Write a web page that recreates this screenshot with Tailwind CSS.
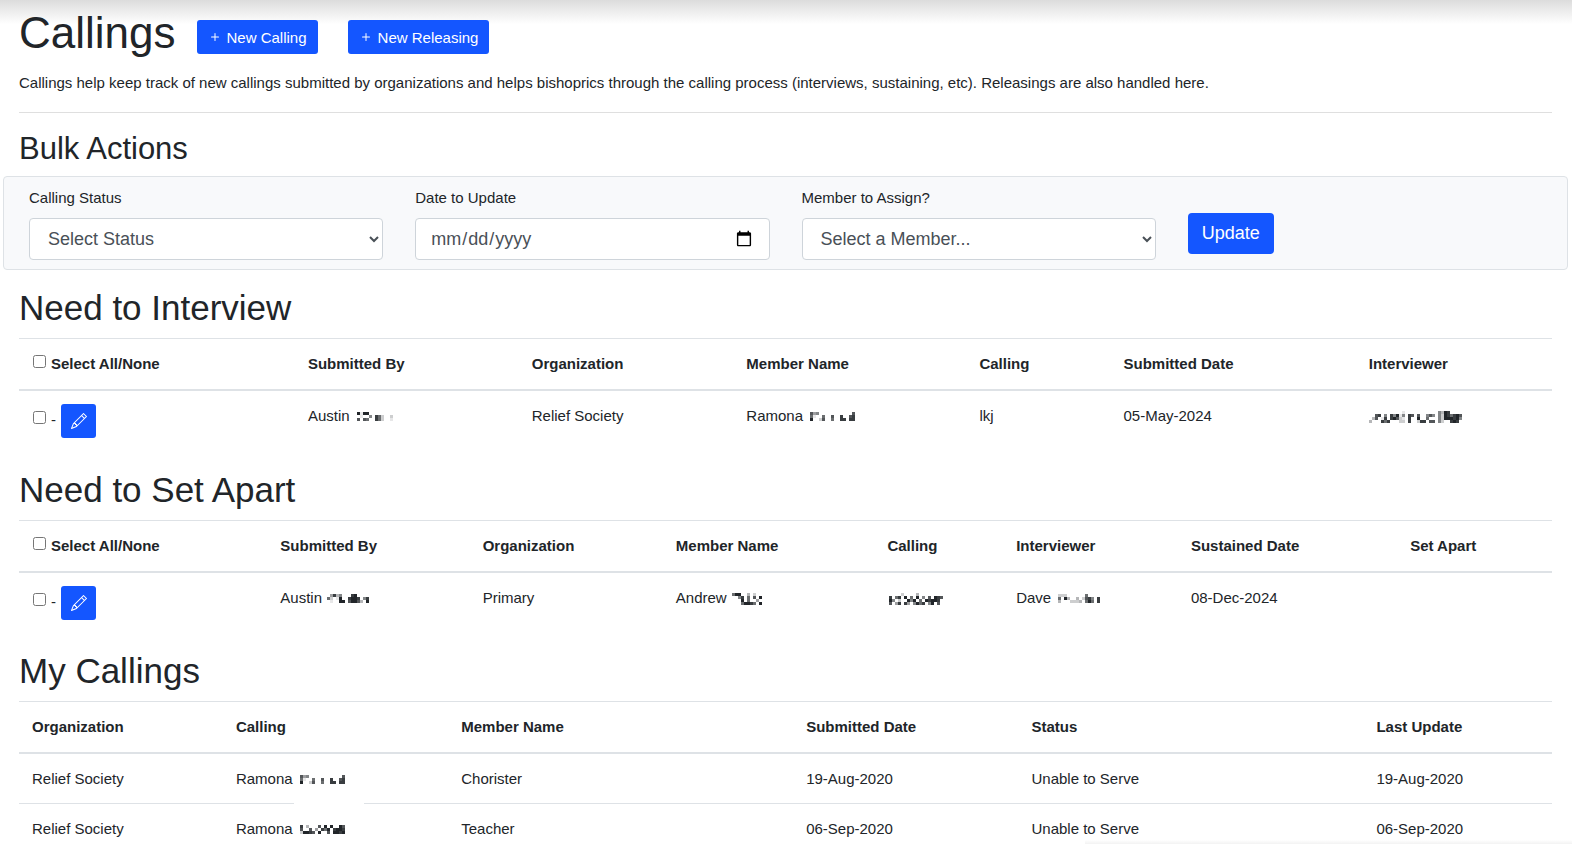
<!DOCTYPE html>
<html lang="en">
<head>
  <meta charset="UTF-8">
  <meta name="viewport" content="width=device-width, initial-scale=1">
  <title>Callings</title>
  <script src="https://cdn.jsdelivr.net/npm/@tailwindcss/browser@4"></script>
</head>
<body class="relative h-screen overflow-hidden bg-white font-['Liberation_Sans',Arial,sans-serif] text-[15px] leading-[23px] text-[#212529]">
  <div class="pointer-events-none absolute inset-x-0 top-0 h-6 bg-linear-to-b from-[#dcdcdc] to-transparent"></div>
  <div class="pointer-events-none absolute bottom-0 right-0 h-1 w-[31%] bg-linear-to-b from-transparent to-black/5"></div>

  <main class="relative pl-[19px] pr-5 pt-1.5">
    <header class="flex items-center">
      <h1 class="mr-[21px] text-[44px] leading-[54px]">Callings</h1>
      <button type="button" class="mt-2 mr-[30px] flex h-[34px] items-center gap-1 rounded-[3px] bg-[#1456ff] pl-2.5 pr-[11px] text-white">
        <svg class="size-4" viewBox="0 0 16 16" fill="currentColor"><path d="M8 4a.5.5 0 0 1 .5.5v3h3a.5.5 0 0 1 0 1h-3v3a.5.5 0 0 1-1 0v-3h-3a.5.5 0 0 1 0-1h3v-3A.5.5 0 0 1 8 4z"/></svg>
        New Calling
      </button>
      <button type="button" class="mt-2 flex h-[34px] items-center gap-1 rounded-[3px] bg-[#1456ff] pl-2.5 pr-[11px] text-white">
        <svg class="size-4" viewBox="0 0 16 16" fill="currentColor"><path d="M8 4a.5.5 0 0 1 .5.5v3h3a.5.5 0 0 1 0 1h-3v3a.5.5 0 0 1-1 0v-3h-3a.5.5 0 0 1 0-1h3v-3A.5.5 0 0 1 8 4z"/></svg>
        New Releasing
      </button>
    </header>
    <p class="mt-[11px]">Callings help keep track of new callings submitted by organizations and helps bishoprics through the calling process (interviews, sustaining, etc). Releasings are also handled here.</p>
    <hr class="mt-[18px] border-[#dfdfdf]">

    <h2 class="mt-[17px] text-[31px] leading-[38px]">Bulk Actions</h2>
    <form class="-mx-4 mt-2 grid grid-cols-4 gap-8 rounded-[4px] border border-[#dee2e6] bg-[#f8f9fb] px-[25px] py-[9px]">
      <div>
        <label for="status" class="mb-[9px] block">Calling Status</label>
        <select id="status" class="h-[42px] w-full rounded-[4px] border border-[#ced4da] bg-white px-3.5 text-[18px] text-[#495057]">
          <option>Select Status</option>
        </select>
      </div>
      <div>
        <label for="date" class="mb-[9px] block">Date to Update</label>
        <input id="date" type="date" class="h-[42px] w-full rounded-[4px] border border-[#ced4da] bg-white px-3.5 text-[18px] text-[#495057]">
      </div>
      <div>
        <label for="member" class="mb-[9px] block">Member to Assign?</label>
        <select id="member" class="h-[42px] w-full rounded-[4px] border border-[#ced4da] bg-white px-3.5 text-[18px] text-[#495057]">
          <option>Select a Member...</option>
        </select>
      </div>
      <div class="pt-[27px]">
        <button type="button" class="h-[41px] rounded-[4px] bg-[#1456ff] px-3.5 text-[18px] text-white">Update</button>
      </div>
    </form>

    <!-- Need to Interview -->
    <h2 class="mt-4 text-[35px] leading-[44px]">Need to Interview</h2>
    <table class="mt-2 w-full table-fixed border-separate border-spacing-0 text-left">
      <thead>
        <tr class="*:border-t *:border-b-2 *:border-[#dee2e6] *:px-[13px] *:pt-[13px] *:pb-3.5">
          <th class="w-[18%]"><label class="flex gap-[5px] pl-px"><input type="checkbox" class="mt-[3px] size-[13px]">Select All/None</label></th>
          <th class="w-[14.6%]">Submitted By</th>
          <th class="w-[14%]">Organization</th>
          <th class="w-[15.2%]">Member Name</th>
          <th class="w-[9.4%]">Calling</th>
          <th class="w-[16%]">Submitted Date</th>
          <th class="w-[12.8%]">Interviewer</th>
        </tr>
      </thead>
      <tbody>
        <tr class="align-top *:px-[13px] *:py-[13px]">
          <td>
            <div class="flex items-center gap-[5px] pl-px">
              <input type="checkbox" aria-label="Select Ramona" class="mb-2 size-[13px]"><span class="pb-1">-</span>
              <button type="button" aria-label="Edit" class="flex h-[34px] w-[35px] items-center justify-center rounded-[3px] bg-[#1456ff] text-white">
                <svg class="size-4" viewBox="0 0 16 16" fill="currentColor"><path d="M12.146.146a.5.5 0 0 1 .708 0l3 3a.5.5 0 0 1 0 .708l-10 10a.5.5 0 0 1-.168.11l-5 2a.5.5 0 0 1-.65-.65l2-5a.5.5 0 0 1 .11-.168l10-10zM11.207 2.5 13.5 4.793 14.793 3.5 12.5 1.207 11.207 2.5zm1.586 3L10.5 3.207 4 9.707V10h.5a.5.5 0 0 1 .5.5v.5h.5a.5.5 0 0 1 .5.5v.5h.293l6.5-6.5zm-9.761 5.175-.106.106-1.528 3.821 3.821-1.528.106-.106A.5.5 0 0 1 5 12.5V12h-.5a.5.5 0 0 1-.5-.5V11h-.5a.5.5 0 0 1-.468-.325z"/></svg>
              </button>
            </div>
          </td>
          <td>Austin <svg class="ml-[3px] inline-block align-baseline" data-mask="919900000000 010050862002 707600862001"></svg></td>
          <td>Relief Society</td>
          <td>Ramona <svg class="ml-[3px] inline-block align-baseline" data-mask="745000000000007 610060070080078 900270060088088"></svg></td>
          <td>lkj</td>
          <td>05-May-2024</td>
          <td><svg class="inline-block align-middle" data-mask="0000000000010000000000053980000 0078050859150870700575052986897 0370180897210800900600052999895 3000868000220800288077052008980"></svg></td>
        </tr>
      </tbody>
    </table>

    <!-- Need to Set Apart -->
    <h2 class="mt-[17px] text-[35px] leading-[44px]">Need to Set Apart</h2>
    <table class="mt-2 w-full table-fixed border-separate border-spacing-0 text-left">
      <thead>
        <tr class="*:border-t *:border-b-2 *:border-[#dee2e6] *:px-[13px] *:pt-[13px] *:pb-3.5">
          <th class="w-[16.2%]"><label class="flex gap-[5px] pl-px"><input type="checkbox" class="mt-[3px] size-[13px]">Select All/None</label></th>
          <th class="w-[13.2%]">Submitted By</th>
          <th class="w-[12.6%]">Organization</th>
          <th class="w-[13.8%]">Member Name</th>
          <th class="w-[8.4%]">Calling</th>
          <th class="w-[11.4%]">Interviewer</th>
          <th class="w-[14.3%]">Sustained Date</th>
          <th class="w-[10.1%]">Set Apart</th>
        </tr>
      </thead>
      <tbody>
        <tr class="align-top *:px-[13px] *:py-[13px]">
          <td>
            <div class="flex items-center gap-[5px] pl-px">
              <input type="checkbox" aria-label="Select Andrew" class="mb-2 size-[13px]"><span class="pb-1">-</span>
              <button type="button" aria-label="Edit" class="flex h-[34px] w-[35px] items-center justify-center rounded-[3px] bg-[#1456ff] text-white">
                <svg class="size-4" viewBox="0 0 16 16" fill="currentColor"><path d="M12.146.146a.5.5 0 0 1 .708 0l3 3a.5.5 0 0 1 0 .708l-10 10a.5.5 0 0 1-.168.11l-5 2a.5.5 0 0 1-.65-.65l2-5a.5.5 0 0 1 .11-.168l10-10zM11.207 2.5 13.5 4.793 14.793 3.5 12.5 1.207 11.207 2.5zm1.586 3L10.5 3.207 4 9.707V10h.5a.5.5 0 0 1 .5.5v.5h.5a.5.5 0 0 1 .5.5v.5h.293l6.5-6.5zm-9.761 5.175-.106.106-1.528 3.821 3.821-1.528.106-.106A.5.5 0 0 1 5 12.5V12h-.5a.5.5 0 0 1-.5-.5V11h-.5a.5.5 0 0 1-.468-.325z"/></svg>
              </button>
            </div>
          </td>
          <td>Austin <svg class="ml-px inline-block align-baseline" data-mask="04835000890000 62019008998058 01009907997309"></svg></td>
          <td>Primary</td>
          <td>Andrew <svg class="ml-px inline-block align-middle" data-mask="6990030200 0058060709 0009060040 0006998609"></svg></td>
          <td><svg class="ml-0.5 inline-block align-middle" data-mask="000020000300000000 806809060905070987 950200959060989980 704808405968059070"></svg></td>
          <td>Dave <svg class="ml-[3px] inline-block align-baseline" data-mask="22200000060000 60930030278508 30002223069608"></svg></td>
          <td>08-Dec-2024</td>
          <td></td>
        </tr>
      </tbody>
    </table>

    <!-- My Callings -->
    <h2 class="mt-4 text-[35px] leading-[44px]">My Callings</h2>
    <table class="mt-2 w-full table-fixed border-separate border-spacing-0 text-left">
      <thead>
        <tr class="*:border-t *:border-b-2 *:border-[#dee2e6] *:px-[13px] *:pt-[13px] *:pb-3.5">
          <th class="w-[13.3%]">Organization</th>
          <th class="w-[14.7%]">Calling</th>
          <th class="w-[22.5%]">Member Name</th>
          <th class="w-[14.7%]">Submitted Date</th>
          <th class="w-[22.5%]">Status</th>
          <th class="w-[12.3%]">Last Update</th>
        </tr>
      </thead>
      <tbody>
        <tr class="*:border-b *:border-[#dee2e6] *:px-[13px] *:py-[13px]">
          <td>Relief Society</td>
          <td class="relative">Ramona <svg class="ml-[3px] inline-block align-baseline" data-mask="745000000000007 610060070080078 900270060088088"></svg><span class="absolute -bottom-px left-[71px] h-px w-[70px] bg-white"></span></td>
          <td>Chorister</td>
          <td>19-Aug-2020</td>
          <td>Unable to Serve</td>
          <td>19-Aug-2020</td>
        </tr>
        <tr class="*:px-[13px] *:py-[13px]">
          <td>Relief Society</td>
          <td>Ramona <svg class="ml-[3px] inline-block align-baseline" data-mask="803000709090097 700704086908998 299870900709989"></svg></td>
          <td>Teacher</td>
          <td>06-Sep-2020</td>
          <td>Unable to Serve</td>
          <td>06-Sep-2020</td>
        </tr>
      </tbody>
    </table>
  </main>

  <script>
    // Pixelated last names: each digit is the darkness of one 3px block
    document.querySelectorAll("svg[data-mask]").forEach(svg => {
      const rows = svg.dataset.mask.split(" ");
      svg.setAttribute("width", rows[0].length * 3);
      svg.setAttribute("height", rows.length * 3);
      svg.innerHTML = rows.map((row, y) => [...row].map((d, x) =>
        d === "0" ? "" : `<rect x="${x * 3}" y="${y * 3}" width="3" height="3" fill="#212529" fill-opacity="${d / 9}" shape-rendering="crispEdges"/>`
      ).join("")).join("");
    });
  </script>
</body>
</html>
